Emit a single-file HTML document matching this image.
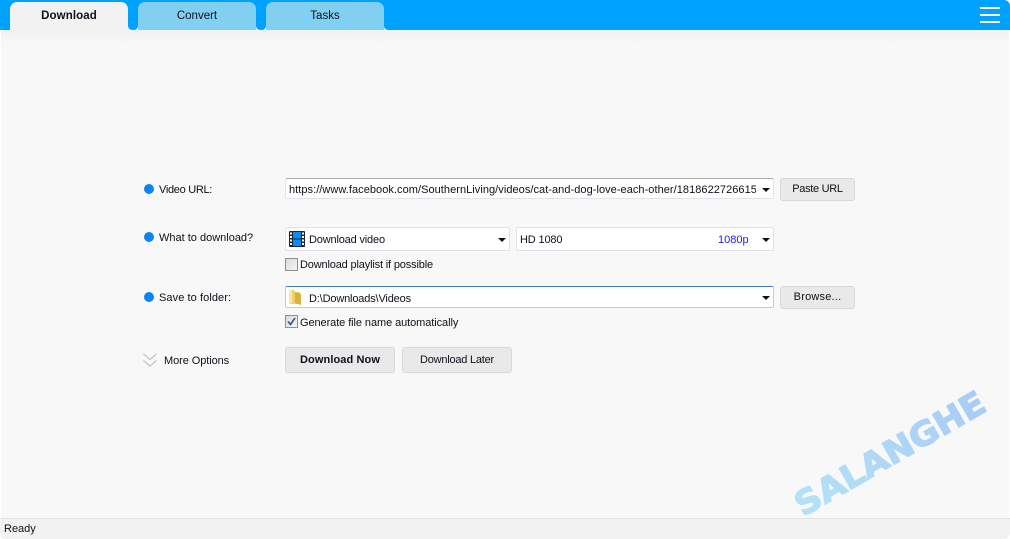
<!DOCTYPE html>
<html><head><meta charset="utf-8">
<style>
html,body{margin:0;padding:0;width:1010px;height:539px;overflow:hidden;background:#fff}
body{position:relative;font-family:"Liberation Sans",sans-serif;font-size:11px;color:#10101a}
div,span{position:absolute;box-sizing:border-box;white-space:nowrap}
.t{line-height:14px;height:14px}
.top{left:0;top:0;width:1010px;height:30px;background:#00a2ff;border-radius:0 6px 0 0}
.main{left:1px;top:30px;width:1008px;height:488px;background:#f8f8f8}
.shade{left:1px;top:30px;width:1008px;height:14px;background:linear-gradient(#f1f1f1,#f8f8f8)}
.tab{top:2px;height:28px;width:118px;background:#81d0f1;border-radius:7px 7px 0 0;text-align:center;line-height:29px;font-size:11.5px}
.tab.a{background:#f2f2f2;font-weight:bold;letter-spacing:.1px}
.cr{top:26px;width:4px;height:4px}
.dot{width:10px;height:10px;border-radius:50%;background:#0a84f5;left:144px}
.box{background:#fff;border:1px solid #e0e3ea;border-radius:2px;height:21px}
.arrow{width:0;height:0;border-left:4px solid transparent;border-right:4px solid transparent;border-top:4px solid #111}
.btn{background:#e9e9e9;border:1px solid #d8d8d8;border-radius:3px;text-align:center}
.cb{width:13px;height:13px;left:285px;border:1px solid #8e8f8f;background:linear-gradient(135deg,#dcdcdc,#f4f4f4)}
.bar{left:980px;width:20px;height:2px;background:#fff}
</style></head><body>
<div class="top"></div>
<div class="main"></div>
<div class="shade"></div>
<div class="tab a" style="left:10px">Download</div>
<div class="tab" style="left:138px">Convert</div>
<div class="tab" style="left:266px">Tasks</div>
<div class="cr" style="left:128px;background:radial-gradient(circle at 100% 0,#00a2ff 3.600px,#f2f2f2 4.200px)"></div>
<div class="cr" style="left:134px;background:radial-gradient(circle at 0 0,#00a2ff 3.600px,#f2f2f2 4.200px)"></div>
<div class="cr" style="left:256px;background:radial-gradient(circle at 100% 0,#00a2ff 3.600px,#f2f2f2 4.200px)"></div>
<div class="cr" style="left:262px;background:radial-gradient(circle at 0 0,#00a2ff 3.600px,#f2f2f2 4.200px)"></div>
<div class="cr" style="left:384px;background:radial-gradient(circle at 100% 0,#00a2ff 3.600px,#f2f2f2 4.200px)"></div>
<div class="bar" style="top:7px"></div>
<div class="bar" style="top:14px"></div>
<div class="bar" style="top:21px"></div>

<div class="dot" style="top:184px"></div>
<div class="t" style="left:159px;top:183px;letter-spacing:-.3px">Video URL:</div>
<div class="box" style="left:285px;top:178px;width:489px;border-top-color:#ababab"></div>
<div class="t" style="left:289px;top:183px;width:467px;overflow:hidden;letter-spacing:.05px">https://www.facebook.com/SouthernLiving/videos/cat-and-dog-love-each-other/1818622726615</div>
<div class="arrow" style="left:762px;top:188px"></div>
<div class="btn t" style="left:780px;top:178px;width:75px;height:23px;line-height:21px;letter-spacing:-.3px">Paste URL</div>

<div class="dot" style="top:232px"></div>
<div class="t" style="left:159px;top:231px">What to download?</div>
<div class="box" style="left:285px;top:227px;width:225px;height:24px"></div>
<svg style="position:absolute;left:289px;top:231px" width="16" height="16" viewBox="0 0 16 16">
<rect x="0" y="0" width="16" height="16" rx="1" fill="#1c2530"/>
<rect x="4" y="1" width="8" height="6.5" fill="#0a8cf5"/><rect x="4" y="8.500" width="8" height="6.5" fill="#0a8cf5"/>
<g fill="#fff"><rect x="1" y="1.5" width="2" height="2"/><rect x="1" y="5" width="2" height="2"/><rect x="1" y="8.500" width="2" height="2"/><rect x="1" y="12" width="2" height="2"/><rect x="13" y="1.5" width="2" height="2"/><rect x="13" y="5" width="2" height="2"/><rect x="13" y="8.500" width="2" height="2"/><rect x="13" y="12" width="2" height="2"/></g>
</svg>
<div class="t" style="left:309px;top:233px;letter-spacing:-.17px">Download video</div>
<div class="arrow" style="left:498px;top:238px"></div>
<div class="box" style="left:516px;top:227px;width:258px;height:24px"></div>
<div class="t" style="left:520px;top:233px;letter-spacing:-.15px">HD 1080</div>
<div class="t" style="left:718px;top:233px;color:#1a1aff">1080p</div>
<div class="arrow" style="left:762px;top:238px"></div>
<div class="cb" style="top:258px"></div>
<div class="t" style="left:300px;top:258px;letter-spacing:-.16px">Download playlist if possible</div>

<div class="dot" style="top:292px"></div>
<div class="t" style="left:159px;top:291px;letter-spacing:.08px">Save to folder:</div>
<div class="box" style="left:285px;top:286px;width:489px;height:22px;border-color:#3f7fc4 #b8cfe6 #b8cfe6 #b8cfe6"></div>
<svg style="position:absolute;left:288px;top:289px" width="16" height="17" viewBox="0 0 16 17">
<path d="M1 1h5l1 2h5l1 12H2L1 14z" fill="#f0cf70"/><path d="M7 3l6 2v11l-6-2z" fill="#dcae3c"/><path d="M1 1h3v13H1z" fill="#fae7a6"/>
</svg>
<div class="t" style="left:309px;top:292px;letter-spacing:-.16px">D:\Downloads\Videos</div>
<div class="arrow" style="left:762px;top:296px"></div>
<div class="btn t" style="left:780px;top:286px;width:75px;height:23px;line-height:21px;letter-spacing:.2px">Browse...</div>
<div class="cb" style="top:315px"></div>
<svg style="position:absolute;left:285px;top:315px" width="13" height="13" viewBox="0 0 13 13"><path d="M3 6.5l2.5 3L10 3" fill="none" stroke="#44568c" stroke-width="1.7"/></svg>
<div class="t" style="left:300px;top:316px;letter-spacing:-.08px">Generate file name automatically</div>

<svg style="position:absolute;left:143px;top:353px" width="15" height="15" viewBox="0 0 15 15"><path d="M.5 1l6.500 5.500L13.500 1M.5 7.500L7 13l6.500-5.500" fill="none" stroke="#b5b5b5" stroke-width="1"/></svg>
<div class="t" style="left:164px;top:354px;letter-spacing:-.08px">More Options</div>
<div class="btn t" style="left:285px;top:347px;width:110px;height:26px;line-height:25px;font-weight:bold;letter-spacing:.1px">Download Now</div>
<div class="btn t" style="left:402px;top:347px;width:110px;height:26px;line-height:25px;letter-spacing:-.22px">Download Later</div>

<svg style="position:absolute;left:770px;top:380px" width="240" height="140" viewBox="0 0 240 140">
<defs><linearGradient id="g" gradientUnits="userSpaceOnUse" x1="30" y1="130" x2="220" y2="20"><stop offset="0" stop-color="#b6e8f6"/><stop offset="1" stop-color="#a9cdf6"/></linearGradient></defs>
<text transform="translate(33,137) rotate(-30)" font-family="DejaVu Sans" font-weight="bold" font-size="33" textLength="214" lengthAdjust="spacingAndGlyphs" fill="url(#g)" stroke="url(#g)" stroke-width="1.4">SALANGHE</text>
</svg>

<div style="left:0;top:518px;width:1010px;height:21px;background:#f2f2f2;border-top:1px solid #e2e2e2;border-radius:0 0 6px 6px"></div>
<div class="t" style="left:4px;top:522px">Ready</div>
</body></html>
